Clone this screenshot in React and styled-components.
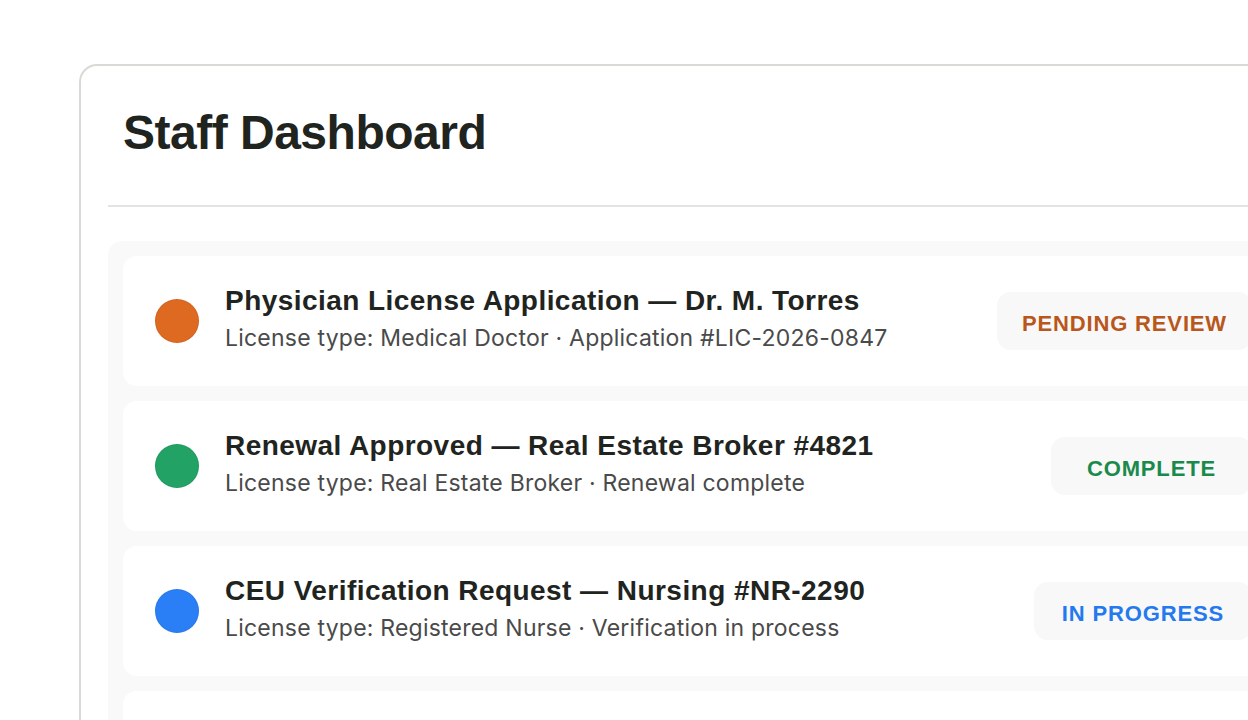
import React from "react";
import styled, { createGlobalStyle } from "styled-components";

const Global = createGlobalStyle`
  html, body { margin: 0; padding: 0; background: #ffffff; overflow: hidden; }
  body { font-family: "Liberation Sans", Arial, sans-serif; }
  * { box-sizing: border-box; }
`;

const Page = styled.div`
  width: 1248px;
  height: 720px;
  padding: 64px 0 0 79px;
  overflow: hidden;
`;

const Card = styled.section`
  width: 1250px;
  background: #ffffff;
  border: 2px solid #d9d9d5;
  border-radius: 18px;
  padding: 10px 28px 28px 27px;
`;

const Header = styled.header`
  padding: 28px 15px 43px 15px;
  border-bottom: 2px solid #e3e3e3;
`;

const Heading = styled.h1`
  margin: 0;
  font-family: "Liberation Sans", Arial, sans-serif;
  font-weight: 700;
  font-size: 48px;
  line-height: 58px;
  letter-spacing: -0.5px;
  color: #1f241f;
`;

const List = styled.div`
  margin-top: 34px;
  background: #f9f9f9;
  border-radius: 14px;
  padding: 15px 15px;
  display: flex;
  flex-direction: column;
  gap: 15px;
`;

const Row = styled.div`
  display: flex;
  align-items: center;
  height: 130px;
  padding: 0 32px;
  background: #ffffff;
  border-radius: 14px;
`;

const Dot = styled.span`
  flex: none;
  width: 44px;
  height: 44px;
  border-radius: 50%;
  background: ${(p) => p.$color};
  box-shadow: inset 0 0 0 1px rgba(0, 0, 0, 0.06);
`;

const Text = styled.div`
  flex: 1;
  margin-left: 26px;
  padding-bottom: 4px;
  min-width: 0;
`;

const Title = styled.div`
  font-family: "Liberation Sans", Arial, sans-serif;
  font-weight: 700;
  font-size: 28px;
  line-height: 30px;
  letter-spacing: 0.45px;
  color: #1f241f;
  white-space: nowrap;
`;

const Sub = styled.div`
  margin-top: 8px;
  font-family: Inter, "Noto Sans", sans-serif;
  font-size: 23px;
  line-height: 28px;
  letter-spacing: 0.22px;
  color: #4a4a4a;
  white-space: nowrap;
`;

const Badge = styled.span`
  flex: none;
  height: 58px;
  display: inline-flex;
  align-items: center;
  justify-content: center;
  padding: 6px ${(p) => p.$pad}px 0;
  background: #f8f8f8;
  border-radius: 14px;
  font-family: "Liberation Sans", Arial, sans-serif;
  font-weight: 700;
  font-size: 22px;
  letter-spacing: 0.85px;
  color: ${(p) => p.$color};
  white-space: nowrap;
`;

const items = [
  {
    dot: "#de6a22",
    title: "Physician License Application — Dr. M. Torres",
    sub: "License type: Medical Doctor · Application #LIC-2026-0847",
    badge: "PENDING REVIEW",
    badgeColor: "#b9561b",
    pad: 25,
  },
  {
    dot: "#22a365",
    title: "Renewal Approved — Real Estate Broker #4821",
    sub: "License type: Real Estate Broker · Renewal complete",
    badge: "COMPLETE",
    badgeColor: "#1a8a4c",
    pad: 36,
  },
  {
    dot: "#2b7ff6",
    title: "CEU Verification Request — Nursing #NR-2290",
    sub: "License type: Registered Nurse · Verification in process",
    badge: "IN PROGRESS",
    badgeColor: "#2479ee",
    pad: 28,
  },
  {
    dot: "#de6a22",
    title: "Pharmacist License Transfer — J. Patel",
    sub: "License type: Pharmacist · Transfer #TR-1184",
    badge: "PENDING REVIEW",
    badgeColor: "#b9561b",
    pad: 25,
  },
];

export default function App() {
  return (
    <>
      <Global />
      <Page>
        <Card>
          <Header>
            <Heading>Staff Dashboard</Heading>
          </Header>
          <List>
            {items.map((it, i) => (
              <Row key={i}>
                <Dot $color={it.dot} />
                <Text>
                  <Title>{it.title}</Title>
                  <Sub>{it.sub}</Sub>
                </Text>
                <Badge $color={it.badgeColor} $pad={it.pad}>
                  {it.badge}
                </Badge>
              </Row>
            ))}
          </List>
        </Card>
      </Page>
    </>
  );
}
